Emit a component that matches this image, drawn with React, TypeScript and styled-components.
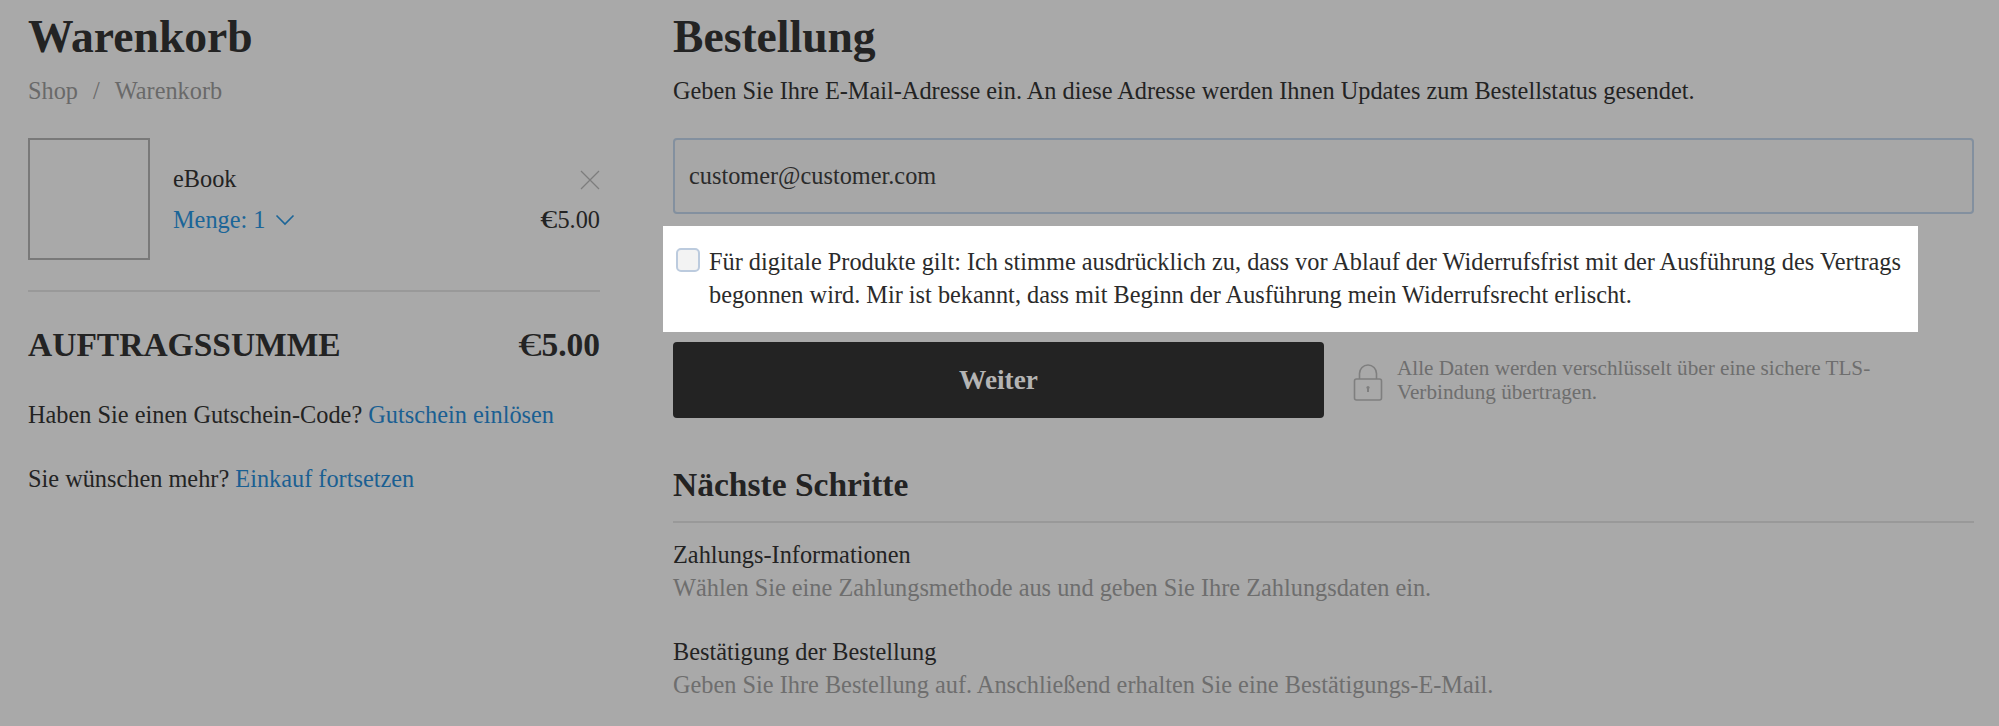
import React from "react";
import styled, { createGlobalStyle } from "styled-components";

const Global = createGlobalStyle`
  html, body {
    margin: 0;
    height: 100%;
    overflow: hidden;
    background: #a9a9a9;
  }
  body {
    font-family: "Liberation Serif", "Times New Roman", serif;
    font-size: 24.32px;
    color: #232323;
  }
  * {
    box-sizing: border-box;
  }
`;

export default function App() {
  return (
    <>
      <Global />
      <Page>
        <Cart>
          <Title>Warenkorb</Title>
          <Breadcrumb>
            <span>Shop</span>
            <span>/</span>
            <span>Warenkorb</span>
          </Breadcrumb>

          <Item>
            <Thumb />
            <ItemBody>
              <ItemRow>
                <span>eBook</span>
                <RemoveIcon width="20" height="20" viewBox="0 0 20 20" fill="none" stroke="#7d7d7d" strokeWidth="1.2">
                  <path d="M1 1l18 18M19 1L1 19" />
                </RemoveIcon>
              </ItemRow>
              <ItemRow>
                <Quantity>
                  Menge: 1
                  <svg width="20" height="12" viewBox="0 0 20 12" fill="none" stroke="#1b6598" strokeWidth="1.6">
                    <path d="M1.5 1.5l8.5 8.5 8.5-8.5" />
                  </svg>
                </Quantity>
                <span>
                  <Euro>€</Euro>5.00
                </span>
              </ItemRow>
            </ItemBody>
          </Item>

          <Total>
            <span>AUFTRAGSSUMME</span>
            <span>
              <Euro>€</Euro>5.00
            </span>
          </Total>

          <Line>
            Haben Sie einen Gutschein-Code? <TextLink>Gutschein einlösen</TextLink>
          </Line>
          <Line>
            Sie wünschen mehr? <TextLink>Einkauf fortsetzen</TextLink>
          </Line>
        </Cart>

        <Order>
          <Title>Bestellung</Title>
          <Intro>Geben Sie Ihre E-Mail-Adresse ein. An diese Adresse werden Ihnen Updates zum Bestellstatus gesendet.</Intro>
          <EmailInput readOnly value="customer@customer.com" />

          <Consent>
            <Checkbox type="checkbox" />
            <ConsentText>
              Für digitale Produkte gilt: Ich stimme ausdrücklich zu, dass vor Ablauf der Widerrufsfrist mit der Ausführung des Vertrags begonnen wird. Mir ist bekannt, dass mit Beginn der Ausführung mein Widerrufsrecht erlischt.
            </ConsentText>
          </Consent>

          <Actions>
            <Submit>Weiter</Submit>
            <svg width="30" height="37" viewBox="0 0 30 37" fill="none" stroke="#7f7f7f" strokeWidth="1.6">
              <path d="M6.5 15V9.5a8.5 8.5 0 0 1 17 0V15" />
              <rect x="1.5" y="15" width="27" height="21" rx="2" />
              <path d="M15 24v4" strokeWidth="2" />
              <circle cx="15" cy="23.5" r="1.6" fill="#7f7f7f" stroke="none" />
            </svg>
            <SecurityNote>Alle Daten werden verschlüsselt über eine sichere TLS-Verbindung übertragen.</SecurityNote>
          </Actions>

          <SectionTitle>Nächste Schritte</SectionTitle>
          <Step>
            <div>Zahlungs-Informationen</div>
            <StepHint>Wählen Sie eine Zahlungsmethode aus und geben Sie Ihre Zahlungsdaten ein.</StepHint>
          </Step>
          <Step>
            <div>Bestätigung der Bestellung</div>
            <StepHint>Geben Sie Ihre Bestellung auf. Anschließend erhalten Sie eine Bestätigungs-E-Mail.</StepHint>
          </Step>
        </Order>
      </Page>
    </>
  );
}

const Page = styled.div`
  display: flex;
  gap: 73px;
  padding: 12px 25px 0 28px;
`;

const Cart = styled.section`
  flex: 0 0 572px;
`;

const Order = styled.section`
  flex: 1;
  min-width: 0;
`;

const Title = styled.h1`
  margin: 0;
  font-size: 45.6px;
  line-height: 50px;
  font-weight: bold;
`;

const Breadcrumb = styled.div`
  display: flex;
  gap: 15px;
  margin-top: 15px;
  line-height: 28px;
  color: #696969;
`;

const Item = styled.div`
  display: flex;
  gap: 23px;
  margin-top: 33px;
  padding-bottom: 30px;
  border-bottom: 2px solid #999;
`;

const Thumb = styled.div`
  flex: 0 0 122px;
  height: 122px;
  border: 2px solid #797979;
`;

const ItemBody = styled.div`
  flex: 1;
  display: flex;
  flex-direction: column;
  gap: 13px;
  padding-top: 27px;
`;

const ItemRow = styled.div`
  display: flex;
  align-items: center;
  justify-content: space-between;
  line-height: 28px;
`;

const RemoveIcon = styled.svg`
  margin-top: 2px;
`;

const Quantity = styled.span`
  display: flex;
  align-items: center;
  gap: 9px;
  color: #1b6598;
`;

const Euro = styled.span`
  display: inline-block;
  margin-left: 0.2em;
  font-weight: normal;
  transform: scaleX(1.4);
  transform-origin: right;
`;

const Total = styled.div`
  display: flex;
  justify-content: space-between;
  margin-top: 33px;
  font-size: 33.5px;
  line-height: 40px;
  font-weight: bold;
`;

const Line = styled.p`
  margin: 36px 0 0;
  line-height: 28px;
`;

const TextLink = styled.a`
  color: #1a5f92;
`;

const Intro = styled.p`
  margin: 15px 0 0;
  line-height: 28px;
`;

const EmailInput = styled.input`
  display: block;
  width: 100%;
  height: 76px;
  margin-top: 33px;
  padding: 0 14px;
  background: #a7a7a7;
  border: 2px solid #83909f;
  border-radius: 4px;
  outline: none;
  font: inherit;
  color: #2b2b2b;
`;

const Consent = styled.label`
  display: flex;
  gap: 9px;
  width: 1255px;
  height: 106px;
  margin: 12px 0 0 -10px;
  padding: 22px 16px 0 13px;
  background: #fff;
`;

const Checkbox = styled.input`
  appearance: none;
  flex: 0 0 24px;
  height: 24px;
  margin: 0;
  background: #f3f3f3;
  border: 2px solid #bccbde;
  border-radius: 5px;
`;

const ConsentText = styled.span`
  line-height: 33px;
  margin-top: -3px;
  color: #2b2b2b;
`;

const Actions = styled.div`
  display: flex;
  align-items: center;
  margin-top: 10px;

  svg {
    flex: none;
    margin: 5px 14px 0 29px;
  }
`;

const Submit = styled.button`
  flex: 0 0 651px;
  height: 76px;
  background: #232323;
  border: 0;
  border-radius: 4px;
  font: inherit;
  font-size: 27.3px;
  font-weight: bold;
  color: #b4b4b4;
`;

const SecurityNote = styled.p`
  width: 500px;
  margin: 0;
  font-size: 21.2px;
  line-height: 24px;
  color: #6e6e6e;
`;

const SectionTitle = styled.h2`
  margin: 48px 0 0;
  padding-bottom: 17px;
  border-bottom: 2px solid #999;
  font-size: 33.5px;
  line-height: 38px;
  font-weight: bold;
`;

const Step = styled.div`
  margin-top: 15px;
  line-height: 33px;

  & + & {
    margin-top: 31px;
  }
`;

const StepHint = styled.div`
  color: #6e6e6e;
`;
